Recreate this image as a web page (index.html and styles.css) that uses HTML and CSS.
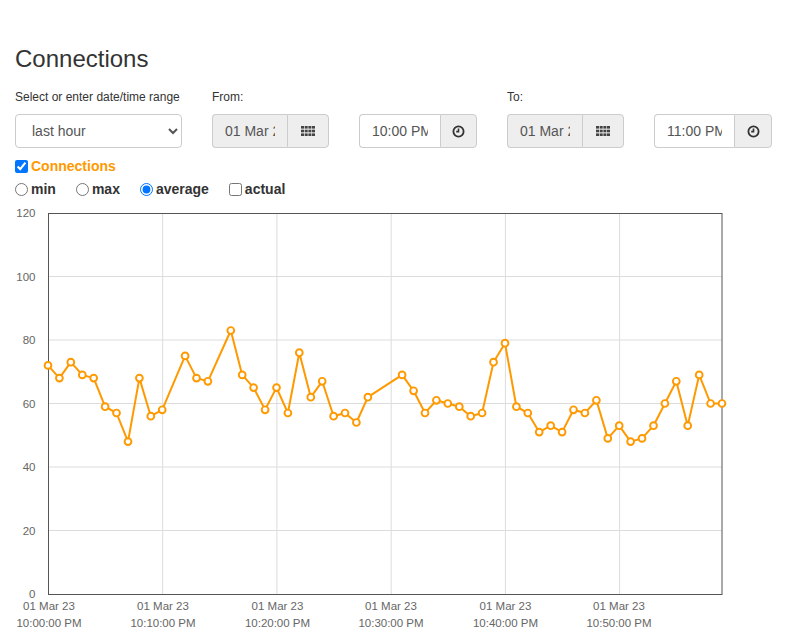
FILE: index.html
```html
<!DOCTYPE html>
<html>
<head>
<meta charset="utf-8">
<link rel="stylesheet" href="styles.css">
</head>
<body>
<h1 class="title">Connections</h1>
<div class="controls">
  <div class="field field-range">
    <label class="field-label">Select or enter date/time range</label>
    <select class="range-select">
      <option>last hour</option>
    </select>
  </div>
  <div class="field">
    <label class="field-label">From:</label>
    <div class="input-group">
      <input class="input input-date" type="text" value="01 Mar 2023" readonly>
      <span class="addon addon-date">
        <svg width="14" height="10" viewBox="0 0 14 10"><g fill="#444"><rect x="0" y="0" width="3" height="2.6"/><rect x="3.7" y="0" width="3" height="2.6"/><rect x="7.4" y="0" width="3" height="2.6"/><rect x="11" y="0" width="3" height="2.6"/><rect x="0" y="3.7" width="3" height="2.6"/><rect x="3.7" y="3.7" width="3" height="2.6"/><rect x="7.4" y="3.7" width="3" height="2.6"/><rect x="11" y="3.7" width="3" height="2.6"/><rect x="0" y="7.4" width="3" height="2.6"/><rect x="3.7" y="7.4" width="3" height="2.6"/><rect x="7.4" y="7.4" width="3" height="2.6"/><rect x="11" y="7.4" width="3" height="2.6"/></g></svg>
      </span>
    </div>
  </div>
  <div class="field">
    <label class="field-label">&nbsp;</label>
    <div class="input-group">
      <input class="input input-time" type="text" value="10:00 PM">
      <span class="addon addon-time">
        <svg width="13" height="13" viewBox="0 0 13 13"><circle cx="6.5" cy="6.5" r="5.1" fill="none" stroke="#333" stroke-width="1.8"/><path d="M6.5 3.4V6.6H4.2" fill="none" stroke="#333" stroke-width="1.6"/></svg>
      </span>
    </div>
  </div>
  <div class="field">
    <label class="field-label">To:</label>
    <div class="input-group">
      <input class="input input-date" type="text" value="01 Mar 2023" readonly>
      <span class="addon addon-date">
        <svg width="14" height="10" viewBox="0 0 14 10"><g fill="#444"><rect x="0" y="0" width="3" height="2.6"/><rect x="3.7" y="0" width="3" height="2.6"/><rect x="7.4" y="0" width="3" height="2.6"/><rect x="11" y="0" width="3" height="2.6"/><rect x="0" y="3.7" width="3" height="2.6"/><rect x="3.7" y="3.7" width="3" height="2.6"/><rect x="7.4" y="3.7" width="3" height="2.6"/><rect x="11" y="3.7" width="3" height="2.6"/><rect x="0" y="7.4" width="3" height="2.6"/><rect x="3.7" y="7.4" width="3" height="2.6"/><rect x="7.4" y="7.4" width="3" height="2.6"/><rect x="11" y="7.4" width="3" height="2.6"/></g></svg>
      </span>
    </div>
  </div>
  <div class="field">
    <label class="field-label">&nbsp;</label>
    <div class="input-group">
      <input class="input input-time input-time-to" type="text" value="11:00 PM">
      <span class="addon addon-time addon-time-to">
        <svg width="13" height="13" viewBox="0 0 13 13"><circle cx="6.5" cy="6.5" r="5.1" fill="none" stroke="#333" stroke-width="1.8"/><path d="M6.5 3.4V6.6H4.2" fill="none" stroke="#333" stroke-width="1.6"/></svg>
      </span>
    </div>
  </div>
</div>

<div class="series-row">
  <label class="opt"><input type="checkbox" checked><span class="series-name">Connections</span></label>
</div>
<div class="mode-row">
  <label class="opt mode"><input type="radio" name="m"><span>min</span></label>
  <label class="opt mode"><input type="radio" name="m"><span>max</span></label>
  <label class="opt mode"><input type="radio" name="m" checked><span>average</span></label>
  <label class="opt mode"><input type="checkbox"><span>actual</span></label>
</div>

<svg class="chart" width="772" height="429" viewBox="15 205 772 429">
  <defs>
    <marker id="pt" markerWidth="10" markerHeight="10" refX="5" refY="5" markerUnits="userSpaceOnUse">
      <circle cx="5" cy="5" r="3.4" fill="#fff" stroke="#ff9900" stroke-width="1.9"/>
    </marker>
  </defs>
  <g stroke="#dcdcdc" stroke-width="1">
    <line x1="48" y1="530.5" x2="722" y2="530.5"/>
    <line x1="48" y1="467" x2="722" y2="467"/>
    <line x1="48" y1="403.5" x2="722" y2="403.5"/>
    <line x1="48" y1="340" x2="722" y2="340"/>
    <line x1="48" y1="276.5" x2="722" y2="276.5"/>
    <line x1="162.7" y1="213" x2="162.7" y2="594"/>
    <line x1="276.9" y1="213" x2="276.9" y2="594"/>
    <line x1="391.2" y1="213" x2="391.2" y2="594"/>
    <line x1="505.4" y1="213" x2="505.4" y2="594"/>
    <line x1="619.6" y1="213" x2="619.6" y2="594"/>
  </g>
  <rect x="48.5" y="213.5" width="673.5" height="381" fill="none" stroke="#555" stroke-width="1"/>
  <g class="axis-y" fill="#666" font-size="11.5" text-anchor="end">
    <text x="35.5" y="217">120</text>
    <text x="35.5" y="280.5">100</text>
    <text x="35.5" y="344">80</text>
    <text x="35.5" y="407.5">60</text>
    <text x="35.5" y="471">40</text>
    <text x="35.5" y="534.5">20</text>
    <text x="35.5" y="598">0</text>
  </g>
  <g class="axis-x" fill="#666" font-size="11.5" text-anchor="middle">
    <text x="49" y="610">01 Mar 23</text><text x="49" y="627">10:00:00 PM</text>
    <text x="163" y="610">01 Mar 23</text><text x="163" y="627">10:10:00 PM</text>
    <text x="277.5" y="610">01 Mar 23</text><text x="277.5" y="627">10:20:00 PM</text>
    <text x="391" y="610">01 Mar 23</text><text x="391" y="627">10:30:00 PM</text>
    <text x="505.5" y="610">01 Mar 23</text><text x="505.5" y="627">10:40:00 PM</text>
    <text x="619" y="610">01 Mar 23</text><text x="619" y="627">10:50:00 PM</text>
  </g>
  <polyline fill="none" stroke="#ff9900" stroke-width="2" stroke-linejoin="round" marker-start="url(#pt)" marker-mid="url(#pt)" marker-end="url(#pt)"
    points="48,365.4 59.4,378.1 70.8,362.2 82.3,374.9 93.7,378.1 105.1,406.7 116.5,413 128,441.6 139.4,378.1 150.8,416.2 162.2,409.8 185.1,355.9 196.5,378.1 207.9,381.3 230.8,330.5 242.2,374.9 253.6,387.6 265.1,409.8 276.5,387.6 287.9,413 299.3,352.7 310.8,397.2 322.2,381.3 333.6,416.2 345,413 356.4,422.5 367.9,397.2 402.1,374.9 413.6,390.8 425,413 436.4,400.3 447.8,403.5 459.3,406.7 470.7,416.2 482.1,413 493.5,362.2 505,343.2 516.4,406.7 527.8,413 539.2,432.1 550.7,425.7 562.1,432.1 573.5,409.8 584.9,413 596.4,400.3 607.8,438.4 619.2,425.7 630.6,441.6 642,438.4 653.5,425.7 664.9,403.5 676.3,381.3 687.7,425.7 699.2,374.9 710.6,403.5 722,403.5"/>
</svg>
</body>
</html>
```

FILE: styles.css
```css
html, body {
  margin: 0;
  padding: 0;
  background: #fff;
}

body {
  padding: 0 15px;
  font-family: "Liberation Sans", Arial, sans-serif;
  font-size: 14px;
  color: #333;
}

.title {
  margin: 46px 0 17px;
  font-size: 24px;
  line-height: 26.4px;
  font-weight: normal;
  color: #333;
}

.controls {
  display: flex;
  gap: 30px;
}

.field {
  display: flex;
  flex-direction: column;
}

.field-label {
  display: block;
  font-size: 12px;
  line-height: 17px;
  height: 17px;
  margin-bottom: 8px;
  color: #333;
}

.range-select {
  width: 167px;
  height: 34px;
  box-sizing: border-box;
  padding: 6px 12px;
  font-family: "Liberation Sans", Arial, sans-serif;
  font-size: 14px;
  color: #555;
  background: #fff;
  border: 1px solid #ccc;
  border-radius: 4px;
}

.input-group {
  display: flex;
  height: 34px;
}

.input {
  box-sizing: border-box;
  height: 34px;
  margin: 0;
  padding: 6px 12px;
  font-family: "Liberation Sans", Arial, sans-serif;
  font-size: 14px;
  color: #555;
  border: 1px solid #ccc;
  border-right: none;
  border-radius: 4px 0 0 4px;
  outline: none;
}

.input-date {
  width: 75px;
  background: #eee;
}

.input-time {
  width: 81px;
  background: #fff;
}

.input-time-to {
  width: 80px;
}

.addon {
  box-sizing: border-box;
  height: 34px;
  display: flex;
  align-items: center;
  justify-content: center;
  background: #eee;
  border: 1px solid #ccc;
  border-radius: 0 4px 4px 0;
}

.addon-date {
  width: 42px;
  padding-bottom: 1px;
}

.addon-time {
  width: 37px;
}

.addon-time-to {
  width: 38px;
}

.series-row {
  margin-top: 8px;
  height: 20px;
  display: flex;
  align-items: center;
}

.mode-row {
  margin-top: 3px;
  height: 20px;
  display: flex;
  align-items: center;
}

.opt {
  display: inline-flex;
  align-items: center;
  font-weight: bold;
  font-size: 14px;
  line-height: 20px;
}

.opt input {
  width: 13px;
  height: 13px;
  margin: 0 3px 0 0;
}

.mode {
  margin-right: 20px;
}

.series-name {
  color: #ff9900;
}

.chart {
  display: block;
  margin-top: 6px;
  font-family: "Liberation Sans", Arial, sans-serif;
}
```
